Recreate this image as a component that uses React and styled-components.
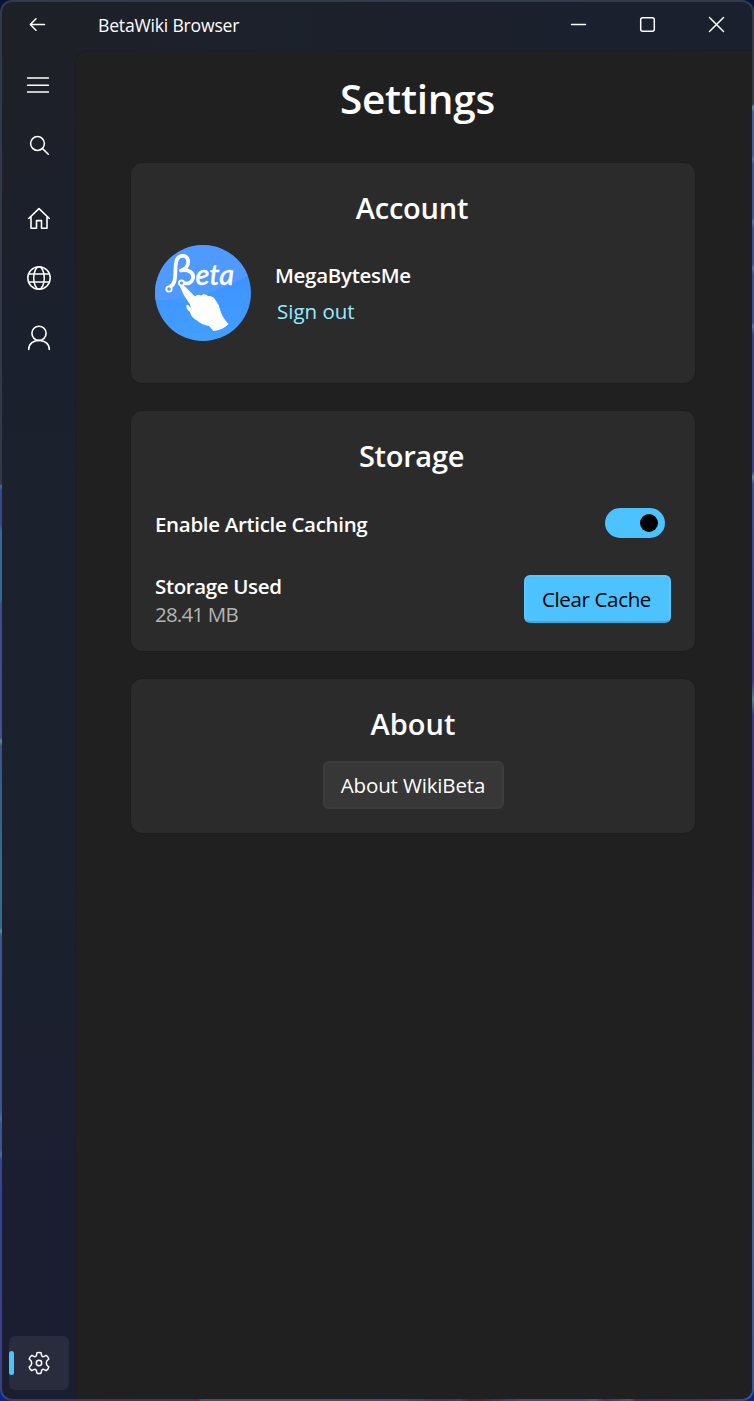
import React from "react";
import styled, { createGlobalStyle } from "styled-components";

const Global = createGlobalStyle`
  * { box-sizing: border-box; }
  body { margin: 0; background: #08184f; }
  button { font: inherit; color: inherit; border: 0; padding: 0; background: none; }
`;

const Desktop = styled.div`
  width: 754px;
  height: 1401px;
  font-family: "Open Sans", "Noto Sans", sans-serif;
  color: #fff;
  background: linear-gradient(#06143a 0 40%, #0a2490 100%);
`;

const Frame = styled.div`
  height: 100%;
  padding: 2px;
  border-radius: 12px;
  background:
    linear-gradient(90deg, #383c68 0, #3a3560 198px, #34566f 202px 330px, #34508a 400px, #343570 440px, #3a4270 460px, #352c48 468px 480px, #34508a 520px 580px, #3f5c80 595px, #34387a 605px, #44587a 630px, #352f60 636px, #343570 700px, #2d5296 100%) bottom / 100% 2px no-repeat,
    linear-gradient(#323a49 0 484px, #447096 486px, #36468c 490px 524px, #3f6390 530px, #356a90 548px 600px, #3f4b8a 605px, #43508c 738px, #559090 741px, #3a5588 746px, #386b87 860px 900px, #3a6a88 928px, #559090 931px, #3b568c 936px 1110px, #447096 1119px, #3b568c 1125px 1150px, #447096 1155px, #36468c 1160px, #3a3f90 1300px, #384478 1401px) left / 20px 100% no-repeat,
    linear-gradient(#323b4c 0 104px, #5c93a8 107px, #39659a 112px 156px, #4b7fa8 159px, #37599a 164px 218px, #4b7fa8 222px, #38519a 228px 264px, #4b7fa8 268px, #38519a 274px 322px, #4b7fa8 326px, #364490 335px 472px, #5c93a8 477px, #38519a 484px, #363a8a 680px, #4f8590 700px, #363a8a 715px, #323274 860px, #443f88 900px, #445088 1060px, #3d6a90 1150px, #39659a 1250px, #32579a 100%) right / 20px 100% no-repeat,
    #323b4c;
`;

const Window = styled.div`
  display: flex;
  flex-direction: column;
  height: 100%;
  border-radius: 10px;
  overflow: hidden;
  background: linear-gradient(#1b202d00 0 49px, #1b202e 350px, #1b222d 600px 760px, #1b202e 1000px, #1b1e31 1200px), linear-gradient(90deg, #1f2027 0, #1c212b 30%, #1a202e 100%);
`;

const TitleBar = styled.header`
  display: flex;
  align-items: center;
  height: 48px;
  flex: none;
  padding: 0 26px 4px 25px;
`;

const Title = styled.div`
  flex: 1;
  margin: 1px 0 0 51px;
  font-size: 17.6px;
  line-height: 24px;
  letter-spacing: ${(p) => p.$track}px;
`;

const Caption = styled.div`
  display: flex;
  gap: 49px;
`;

const Icon = styled.svg`
  display: block;
  flex: none;
  fill: none;
  stroke: #fff;
  stroke-width: ${(p) => p.$weight || 1.5};
  stroke-linecap: round;
  stroke-linejoin: round;
`;

const Body = styled.div`
  display: flex;
  flex: 1;
  min-height: 0;
`;

const Rail = styled.nav`
  display: flex;
  flex-direction: column;
  width: 73px;
  padding: 8px 6px 9px 7px;
`;

const RailItem = styled.button`
  display: flex;
  align-items: center;
  justify-content: center;
  position: relative;
  width: 60px;
  height: 54px;
  margin-top: ${(p) => p.$gap || 0}px;
  border-radius: 6px;
  background: ${(p) => (p.$active ? "#282c3d" : "transparent")};
  &::before {
    content: "";
    display: ${(p) => (p.$active ? "block" : "none")};
    position: absolute;
    left: 0;
    top: 15px;
    width: 5px;
    height: 24px;
    border-radius: 3px;
    background: #4cc2ff;
  }
`;

const Spacer = styled.div`
  flex: 1;
`;

const Page = styled.main`
  flex: 1;
  border: solid #1b1d24;
  border-width: 1px 0 0 1px;
  border-top-left-radius: 12px;
  padding: 18px 56px 0 54px;
  background: #202020;
`;

const Heading = styled.h1`
  margin: 0 0 33px 9px;
  font-size: 40.5px;
  font-weight: 600;
  line-height: 60px;
  letter-spacing: ${(p) => p.$track}px;
  text-align: center;
`;

const Card = styled.section`
  height: ${(p) => p.$height}px;
  margin-bottom: 26px;
  padding: 25px 24px 0;
  border: 1px solid #1d1d1d;
  border-radius: 12px;
  background: #2b2b2b;
`;

const CardTitle = styled.h2`
  margin: 0;
  padding-right: ${(p) => p.$inset || 0}px;
  font-size: 29px;
  font-weight: 600;
  line-height: 40px;
  letter-spacing: ${(p) => p.$track}px;
  text-align: center;
`;

const Row = styled.div`
  display: flex;
  align-items: center;
  justify-content: ${(p) => p.$justify || "space-between"};
  height: ${(p) => p.$height}px;
  margin-top: ${(p) => p.$gap}px;
`;

const Text = styled.div`
  font-size: 20.5px;
  font-weight: ${(p) => (p.$strong ? 600 : 400)};
  line-height: 28px;
  letter-spacing: ${(p) => p.$track || 0}px;
  color: ${(p) => p.$color || "#fff"};
  white-space: nowrap;
`;

const Label = styled.div`
  padding-top: 2px;
`;

const Profile = styled.div`
  flex: 1;
  display: flex;
  flex-direction: column;
  gap: 8px;
  margin-left: 24px;
`;

const Link = styled(Text)`
  padding-left: 2px;
`;

const Toggle = styled.button`
  display: flex;
  align-items: center;
  justify-content: flex-end;
  width: 60px;
  height: 30px;
  margin-right: 6px;
  padding-right: 7px;
  border-radius: 15px;
  background: #4cc2ff;
`;

const Knob = styled.span`
  width: 18px;
  height: 18px;
  border-radius: 50%;
  background: #000;
`;

const Button = styled.button`
  display: flex;
  align-items: center;
  justify-content: center;
  width: ${(p) => p.$width}px;
  height: 48px;
  padding-right: ${(p) => (p.$accent ? 2 : 0)}px;
  border-radius: 6px;
  border: 2px solid ${(p) => (p.$accent ? "#5ac6ff" : "#3d3d3d")};
  border-bottom-color: ${(p) => (p.$accent ? "#42a5da" : "#3c3c3c")};
  background: ${(p) => (p.$accent ? "#4cc2ff" : "#373737")};
`;

const AvatarWord = styled.text`
  font: italic 500 28px Lato, sans-serif;
  fill: #fff;
  stroke: #fff;
  stroke-width: 0.4;
`;

function Avatar() {
  return (
    <svg width="96" height="96" viewBox="0 0 96 96">
      <defs>
        <linearGradient id="sky" x1="0" y1="0" x2="0" y2="1">
          <stop offset="0" stopColor="#3a8dff" />
          <stop offset="1" stopColor="#439fff" />
        </linearGradient>
        <clipPath id="disc"><circle cx="48" cy="48" r="48" /></clipPath>
      </defs>
      <g clipPath="url(#disc)">
        <rect width="96" height="96" fill="url(#sky)" />
        <path d="M0 0H96V29C70 43 45 56 0 55Z" fill="#5099ff" />
      </g>
      <g fill="none" stroke="#fff" strokeLinecap="round" strokeLinejoin="round">
        <path d="M15.5 41.5C22 38 19.5 27 21 18C22 9 32 9 33 15C34 21 30 24.5 26 25.5C34 24 39 28 38 33C37 38.5 32 39 29 38" strokeWidth="3.8" />
        <circle cx="14" cy="44" r="2.7" strokeWidth="1.8" fill="#5099ff" />
        <circle cx="26.5" cy="38" r="2.5" strokeWidth="1.8" fill="#5099ff" />
      </g>
      <AvatarWord x="40.5" y="40" textLength="38.5" lengthAdjust="spacingAndGlyphs">eta</AvatarWord>
      <path d="M25 41.5Q28 39 30.5 42L40 51.5Q42.5 48.5 46 50.5Q50 48 53 51Q58 50.5 60.5 55Q64.5 60 65.5 66Q67 72 73.5 79Q68 85 58.5 86L54 81Q46 79.5 42 75.5Q36 72.5 35 67Q30.5 64 31.5 60Q33 58.5 35.5 63Q36 60 33 56.5Q28 50 25 41.5Z" fill="#fff" />
    </svg>
  );
}

export default function App() {
  return (
    <>
      <Global />
      <Desktop>
        <Frame>
          <Window>
            <TitleBar>
              <Icon width="20" height="20" viewBox="0 0 20 20"><path d="M17.5 10.5H3.5M9 4.7L3.3 10.5L9 16.3" /></Icon>
              <Title $track={-0.2}>BetaWiki Browser</Title>
              <Caption>
                <Icon width="20" height="20" viewBox="0 0 20 20"><path d="M3.5 10.5H17.5" /></Icon>
                <Icon width="20" height="20" viewBox="0 0 20 20"><rect x="3.7" y="3.7" width="13.6" height="13.6" rx="2" /></Icon>
                <Icon width="20" height="20" viewBox="0 0 20 20"><path d="M3.5 3.5L17.5 17.5M17.5 3.5L3.5 17.5" /></Icon>
              </Caption>
            </TitleBar>
            <Body>
              <Rail>
                <RailItem>
                  <Icon width="26" height="26" viewBox="0 0 26 26" $weight={1.4}><path d="M1.5 6H22.5M1.5 13.3H22.5M1.5 20H22.5" /></Icon>
                </RailItem>
                <RailItem $gap={6}>
                  <Icon width="26" height="26" viewBox="0 0 26 26"><circle cx="11.5" cy="11.5" r="6.9" /><path d="M16.6 16.6L22.3 22.3" /></Icon>
                </RailItem>
                <RailItem $gap={19}>
                  <Icon width="26" height="26" viewBox="0 0 26 26" $weight={1.6}><path d="M2.7 13.5L13 3.6L23.3 13.5M5 11.5V23.2H10.5V15.6H15.5V23.2H21V11.5" /></Icon>
                </RailItem>
                <RailItem $gap={6}>
                  <Icon width="26" height="26" viewBox="0 0 26 26"><circle cx="13" cy="13" r="11.2" /><ellipse cx="13" cy="13" rx="5.3" ry="11.2" /><path d="M2.5 9H23.5M2.5 17H23.5" /></Icon>
                </RailItem>
                <RailItem $gap={6}>
                  <Icon width="26" height="26" viewBox="0 0 26 26" $weight={1.6}><circle cx="13" cy="8.3" r="7.1" /><path d="M2.7 24.5C2.7 12.4 23.3 12.4 23.3 24.5" /></Icon>
                </RailItem>
                <Spacer />
                <RailItem $active>
                  <Icon width="26" height="26" viewBox="0 0 26 26">
                    <path d="M11 2.8Q13 2.2 15 2.8L15.6 5.4Q16 7 17.7 6.6L20.1 5.3Q22.2 6.5 22.8 9L21 10.7Q19.5 13 21 15.3L22.8 17Q22.2 19.5 20.1 20.7L17.7 19.4Q16 19 15.6 20.6L15 23.2Q13 23.8 11 23.2L10.4 20.6Q10 19 8.3 19.4L5.9 20.7Q3.8 19.5 3.2 17L5 15.3Q6.5 13 5 10.7L3.2 9Q3.8 6.5 5.9 5.3L8.3 6.6Q10 7 10.4 5.4Z" />
                    <circle cx="13" cy="13" r="2.7" />
                  </Icon>
                </RailItem>
              </Rail>
              <Page>
                <Heading $track={-0.2}>Settings</Heading>
                <Card $height={222}>
                  <CardTitle $track={-0.2} $inset={2}>Account</CardTitle>
                  <Row $height={96} $gap={17}>
                    <Avatar />
                    <Profile>
                      <Text $strong $track={-0.3}>MegaBytesMe</Text>
                      <Link as="a" $color="#99ebff">Sign out</Link>
                    </Profile>
                  </Row>
                </Card>
                <Card $height={242}>
                  <CardTitle $track={-0.3} $inset={3}>Storage</CardTitle>
                  <Row $height={30} $gap={32}>
                    <Label>
                      <Text $strong $track={-0.32}>Enable Article Caching</Text>
                    </Label>
                    <Toggle><Knob /></Toggle>
                  </Row>
                  <Row $height={56} $gap={33}>
                    <Label>
                      <Text $strong $track={-0.36}>Storage Used</Text>
                      <Text $color="#b4b4b4" $track={-0.8}>28.41 MB</Text>
                    </Label>
                    <Button $accent $width={147}><Text $color="#000" $track={-0.35}>Clear Cache</Text></Button>
                  </Row>
                </Card>
                <Card $height={156}>
                  <CardTitle $track={0}>About</CardTitle>
                  <Row $height={48} $gap={17} $justify="center">
                    <Button $width={181}><Text $track={-0.15}>About WikiBeta</Text></Button>
                  </Row>
                </Card>
              </Page>
            </Body>
          </Window>
        </Frame>
      </Desktop>
    </>
  );
}
